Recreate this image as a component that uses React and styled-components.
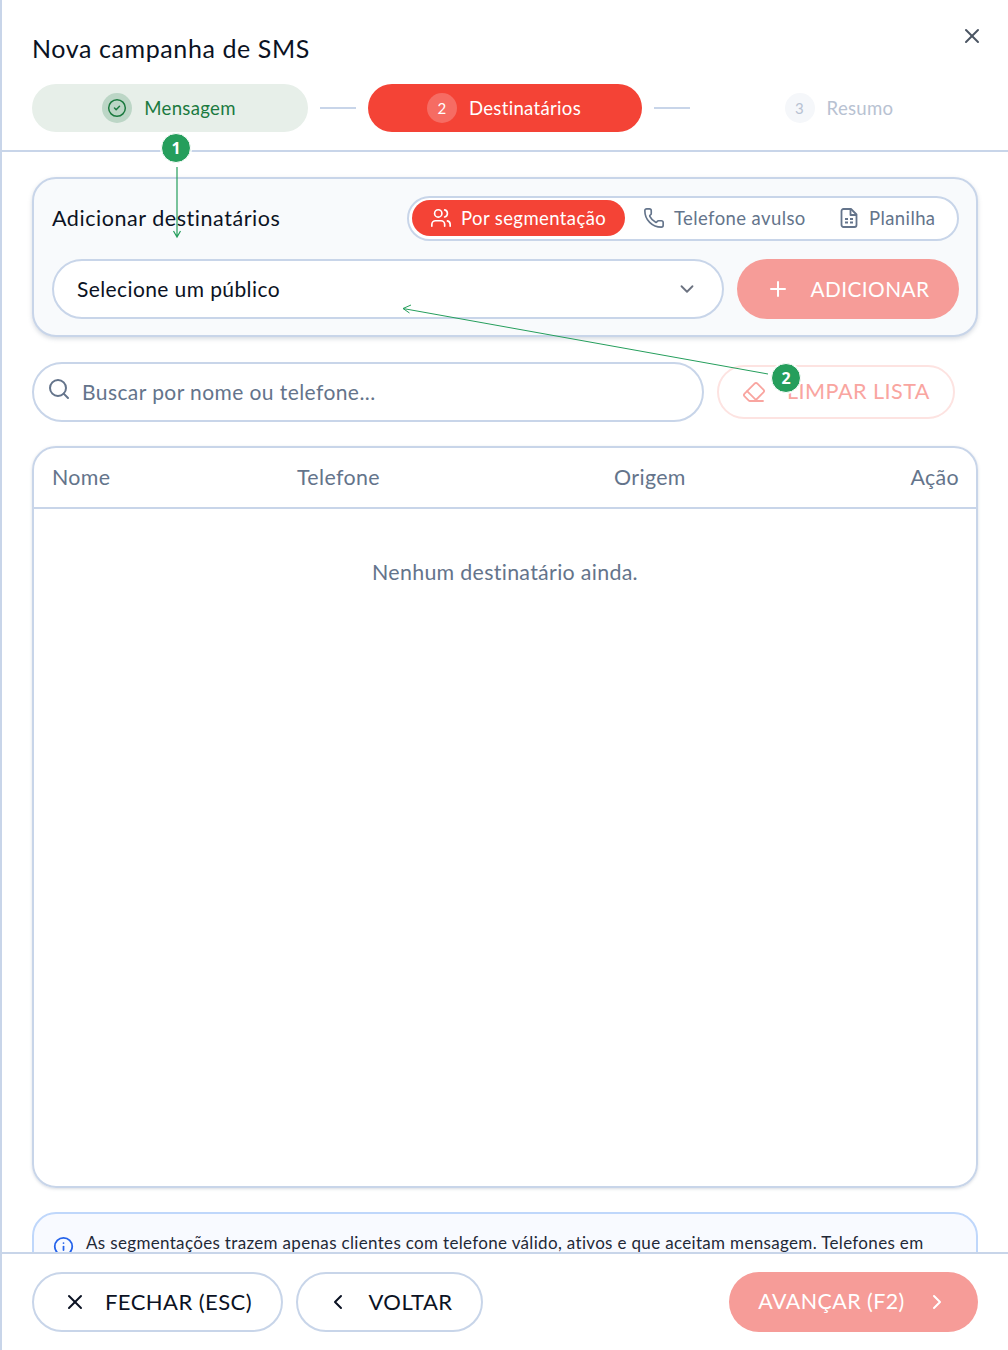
import React from 'react';
import styled, { createGlobalStyle } from 'styled-components';
import {
  CircleCheck, X, Users, Phone, ChevronDown, Plus, Search,
  Eraser, Info, ChevronLeft, ChevronRight,
} from 'lucide-react';

const Global = createGlobalStyle`
  html, body { margin: 0; padding: 0; background: #fff; }
  body { font-family: Lato, "Open Sans", sans-serif; color: #0b1223; }
  * { box-sizing: border-box; }
`;

const line = '#c8d5e9';

const Modal = styled.div`
  position: relative;
  width: 1008px;
  height: 1350px;
  border-left: 2px solid ${line};
  display: flex;
  flex-direction: column;
  overflow: hidden;
  background: #fff;
`;

const Header = styled.header`
  position: relative;
  height: 152px;
  flex: none;
  padding: 32px 30px 0;
  border-bottom: 2px solid ${line};
`;

const Title = styled.h1`
  margin: -1px 0 19px;
  font-size: 25px;
  line-height: 34px;
  font-weight: 400;
  letter-spacing: 0.6px;
`;

const Close = styled.button`
  position: absolute;
  top: 24px;
  right: 24px;
  width: 24px;
  height: 24px;
  padding: 0;
  border: 0;
  background: none;
  color: #4b5563;
  display: flex;
`;

const Stepper = styled.div`
  display: flex;
  align-items: center;
  gap: 12px;
`;

const stepBg = { done: '#e7efe9', active: '#f44336', todo: 'transparent' };
const stepFg = { done: '#1b7a3f', active: '#fff', todo: '#b8c2d2' };
const dotBg = { done: '#bcd6c6', active: '#f66c63', todo: '#f5f7fa' };

const Label = styled.span`
  margin-bottom: 2px;
`;

const Step = styled.div`
  flex: none;
  width: ${p => p.$w}px;
  height: 48px;
  padding-right: 2px;
  border-radius: 24px;
  display: flex;
  align-items: center;
  justify-content: center;
  gap: 12px;
  font-size: 18.6px;
  letter-spacing: 0.3px;
  background: ${p => stepBg[p.$state]};
  color: ${p => stepFg[p.$state]};
  ${Label} { margin-bottom: 0; }
`;

const StepDot = styled.span`
  width: 30px;
  height: 30px;
  border-radius: 50%;
  display: flex;
  align-items: center;
  justify-content: center;
  font-size: 15px;
  background: ${p => dotBg[p.$state]};
`;

const Connector = styled.span`
  flex: none;
  width: 36px;
  height: 2px;
  background: ${line};
`;

const Body = styled.main`
  flex: 1;
  min-height: 0;
  overflow: hidden;
  padding: 25px 30px 0;
  display: flex;
  flex-direction: column;
`;

const Card = styled.section`
  flex: none;
  height: 160px;
  padding: 17px 18px 0 19px;
  border: 2px solid ${line};
  border-radius: 24px;
  background: #f8fafc;
  box-shadow: 0 2px 4px rgba(100, 116, 139, 0.25);
`;

const CardTop = styled.div`
  display: flex;
  align-items: center;
  justify-content: space-between;
  height: 44px;
  margin: 0 -1px 19px;
`;

const CardTitle = styled.h2`
  margin: 0;
  font-size: 21.5px;
  font-weight: 400;
  letter-spacing: 0.55px;
`;

const Toggle = styled.div`
  width: 552px;
  height: 45px;
  padding: 3px;
  border: 2px solid ${line};
  border-radius: 23px;
  background: #fff;
  display: flex;
  align-items: center;
`;

const ToggleItem = styled.div`
  height: 36px;
  width: ${p => p.$w}px;
  padding-left: ${p => p.$pad}px;
  border-radius: 18px;
  display: flex;
  align-items: center;
  gap: 9px;
  font-size: 18.5px;
  letter-spacing: 0.4px;
  background: ${p => (p.$active ? '#f44336' : 'transparent')};
  color: ${p => (p.$active ? '#fff' : '#64748b')};
  ${Label} { margin-bottom: 0; }
`;

const Row = styled.div`
  display: flex;
  align-items: center;
  gap: 13px;
  margin: 0 -1px;
`;

const Select = styled.div`
  flex: 1;
  height: 60px;
  padding: 0 24px 0 23px;
  border: 2px solid ${line};
  border-radius: 30px;
  background: #fff;
  display: flex;
  align-items: center;
  justify-content: space-between;
  font-size: 21px;
  letter-spacing: 0.4px;
  svg { color: #6b7280; }
`;

const SolidButton = styled.button`
  height: 60px;
  width: ${p => p.$w}px;
  flex: none;
  padding: 0;
  border: 0;
  border-radius: 30px;
  display: flex;
  align-items: center;
  justify-content: center;
  gap: ${p => p.$gap || 19}px;
  font-family: inherit;
  font-size: ${p => p.$size || 20.8}px;
  letter-spacing: 0.45px;
  color: #fff;
  background: #f69c98;
`;

const SearchRow = styled(Row)`
  margin: 25px 0 24px;
  flex: none;
`;

const SearchBox = styled.div`
  width: 672px;
  height: 60px;
  padding: 0 15px 0 13px;
  border: 2px solid ${line};
  border-radius: 30px;
  display: flex;
  align-items: center;
  gap: 11px;
  font-size: 21px;
  letter-spacing: 0.42px;
  color: #64748b;
  svg { margin-top: -6px; }
`;

const ClearButton = styled.button`
  width: 238px;
  height: 54px;
  padding: 0;
  border: 2px solid #fde3e1;
  border-radius: 27px;
  background: #fff;
  display: flex;
  align-items: center;
  justify-content: center;
  gap: 21px;
  font-family: inherit;
  font-size: 21.6px;
  letter-spacing: 0.45px;
  color: #f9a5a0;
`;

const Table = styled.section`
  flex: none;
  height: 742px;
  border: 2px solid ${line};
  border-radius: 24px;
  box-shadow: 0 1px 3px rgba(100, 116, 139, 0.25);
  overflow: hidden;
`;

const TableHead = styled.div`
  height: 61px;
  padding: 0 17px 0 18px;
  border-bottom: 2px solid ${line};
  display: grid;
  grid-template-columns: 245px 317px 1fr auto;
  align-items: center;
  font-size: 21.4px;
  letter-spacing: 0.35px;
  color: #64748b;
`;

const Empty = styled.p`
  margin: 50px 0 0;
  text-align: center;
  font-size: 21.4px;
  line-height: 26px;
  letter-spacing: 0.3px;
  color: #64748b;
`;

const Notice = styled.aside`
  flex: none;
  margin-top: 24px;
  height: 70px;
  padding: 19px 18px 0 19px;
  border: 2px solid #bfd7fb;
  border-radius: 24px;
  background: #f8faff;
  display: flex;
  gap: 12px;
  font-size: 17px;
  line-height: 20px;
  letter-spacing: 0.33px;
  color: #1f2937;
  white-space: nowrap;
  svg { color: #2563eb; flex: none; margin-top: 3px; }
`;

const Footer = styled.footer`
  flex: none;
  height: 98px;
  padding: 18px 30px 0;
  border-top: 2px solid ${line};
  background: #fff;
  display: flex;
  align-items: flex-start;
  gap: 13px;
`;

const OutlineButton = styled.button`
  width: ${p => p.$w}px;
  height: 60px;
  padding: 0;
  border: 2px solid ${line};
  border-radius: 30px;
  background: #fff;
  display: flex;
  align-items: center;
  justify-content: center;
  gap: 18px;
  font-family: inherit;
  font-size: 22px;
  letter-spacing: 0.45px;
  color: #0b1223;
`;

const Spacer = styled.div`
  flex: 1;
`;

const Arrows = styled.svg`
  position: absolute;
  top: 0;
  left: -2px;
  width: 1008px;
  height: 1350px;
  pointer-events: none;
`;

const Marker = styled.span`
  position: absolute;
  left: ${p => p.$x - 2 - 15}px;
  top: ${p => p.$y - 15}px;
  width: 30px;
  height: 30px;
  border: 1px solid #fff;
  border-radius: 50%;
  box-shadow: 0 0 0 1px #fff;
  background: #259e5c;
  color: #fff;
  display: flex;
  align-items: center;
  justify-content: center;
  font-family: "Open Sans", sans-serif;
  font-size: 16px;
  font-weight: 700;
`;

// planilha: folha com canto dobrado e grade pequena
const SheetIcon = () => (
  <svg width="22" height="22" viewBox="0 0 22 22" fill="none" stroke="currentColor" strokeWidth="1.8" strokeLinejoin="round">
    <path d="M5.5 2H13L18.5 7.5V18A2 2 0 0 1 16.5 20H5.5A2 2 0 0 1 3.5 18V4A2 2 0 0 1 5.5 2Z" />
    <path d="M12.5 2V8H18.5" />
    <path d="M7 12H10M12 12H15M7 15.5H10M12 15.5H15" />
  </svg>
);

export default function App() {
  return (
    <>
      <Global />
      <Modal>
        <Header>
          <Title>Nova campanha de SMS</Title>
          <Close><X size={24} strokeWidth={2} /></Close>
          <Stepper>
            <Step $state="done" $w={276}>
              <StepDot $state="done"><CircleCheck size={20} strokeWidth={1.8} /></StepDot>
              <Label>Mensagem</Label>
            </Step>
            <Connector />
            <Step $state="active" $w={274}>
              <StepDot $state="active">2</StepDot>
              <Label>Destinatários</Label>
            </Step>
            <Connector />
            <Step $state="todo" $w={276}>
              <StepDot $state="todo">3</StepDot>
              <Label>Resumo</Label>
            </Step>
          </Stepper>
        </Header>

        <Body>
          <Card>
            <CardTop>
              <CardTitle>Adicionar destinatários</CardTitle>
              <Toggle>
                <ToggleItem $active $w={213} $pad={18}><Users size={22} strokeWidth={1.8} /><Label>Por segmentação</Label></ToggleItem>
                <ToggleItem $w={197} $pad={18}><Phone size={22} strokeWidth={1.8} /><Label>Telefone avulso</Label></ToggleItem>
                <ToggleItem $w={130} $pad={16}><SheetIcon /><Label>Planilha</Label></ToggleItem>
              </Toggle>
            </CardTop>
            <Row>
              <Select>
                <Label>Selecione um público</Label>
                <ChevronDown size={22} strokeWidth={2} />
              </Select>
              <SolidButton $w={222} $gap={20}><Plus size={24} strokeWidth={2} /><Label>ADICIONAR</Label></SolidButton>
            </Row>
          </Card>

          <SearchRow>
            <SearchBox>
              <Search size={24} strokeWidth={2} />
              <Label>Buscar por nome ou telefone...</Label>
            </SearchBox>
            <ClearButton><Eraser size={24} strokeWidth={1.8} /><Label>LIMPAR LISTA</Label></ClearButton>
          </SearchRow>

          <Table>
            <TableHead>
              <Label>Nome</Label>
              <Label>Telefone</Label>
              <Label>Origem</Label>
              <Label>Ação</Label>
            </TableHead>
            <Empty>Nenhum destinatário ainda.</Empty>
          </Table>

          <Notice>
            <Info size={21} strokeWidth={2} />
            <Label>As segmentações trazem apenas clientes com telefone válido, ativos e que aceitam mensagem. Telefones em</Label>
          </Notice>
        </Body>

        <Footer>
          <OutlineButton $w={251}><X size={24} strokeWidth={2} /><Label>FECHAR (ESC)</Label></OutlineButton>
          <OutlineButton $w={187}><ChevronLeft size={24} strokeWidth={2} /><Label>VOLTAR</Label></OutlineButton>
          <Spacer />
          <SolidButton $w={249} $gap={20} $size={21.4}><Label>AVANÇAR (F2)</Label><ChevronRight size={24} strokeWidth={2} /></SolidButton>
        </Footer>

        <Arrows viewBox="0 0 1008 1350" fill="none" stroke="#259e5c">
          <path d="M177 167V237M173.5 231L177 237L180.5 231" strokeWidth="1.2" />
          <path d="M768 374L403 308.5M411 305L403 308.5L409.5 313" strokeWidth="1" />
        </Arrows>
        <Marker $x={176} $y={148}>1</Marker>
        <Marker $x={786} $y={378}>2</Marker>
      </Modal>
    </>
  );
}
